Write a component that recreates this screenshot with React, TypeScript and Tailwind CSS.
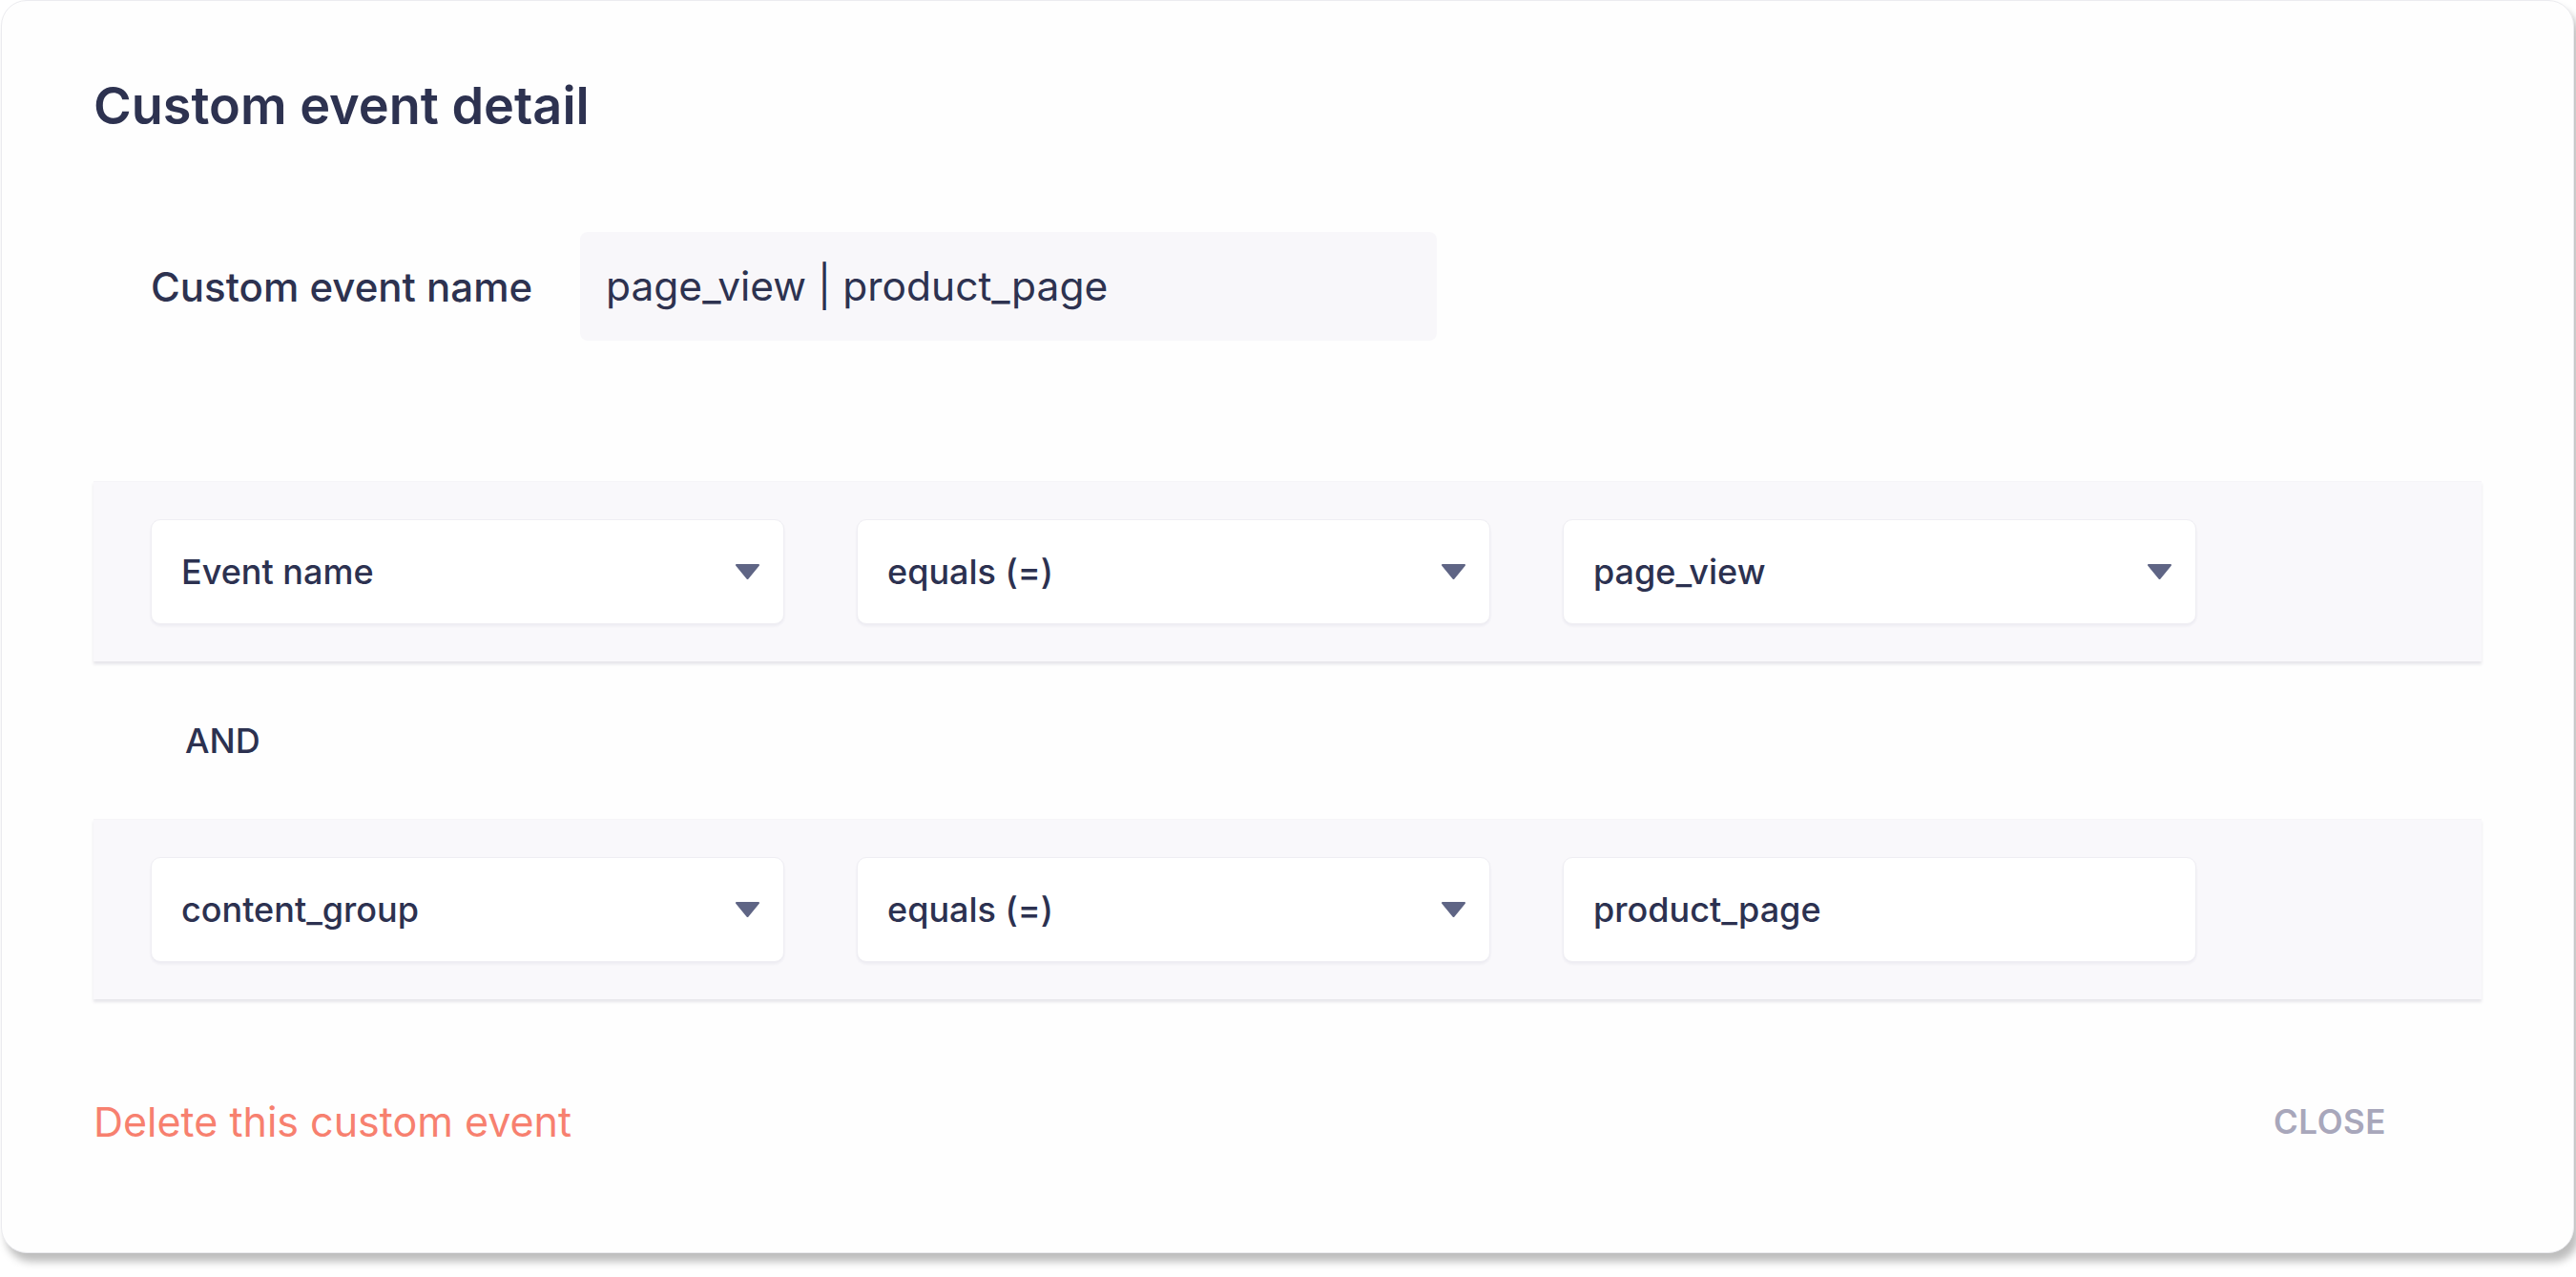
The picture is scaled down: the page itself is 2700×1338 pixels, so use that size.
import React from "react";

type FieldProps = {
  value: string;
  caret?: boolean;
};

function Caret() {
  return (
    <svg aria-hidden width="27" height="16" viewBox="0 0 27 16" className="shrink-0">
      <path
        d="M2 1h23L13.5 15z"
        fill="#5f6585"
        stroke="#5f6585"
        strokeWidth="2"
        strokeLinejoin="round"
      />
    </svg>
  );
}

function Field({ value, caret = true }: FieldProps) {
  return (
    <div className="flex h-[110px] w-[664px] items-center justify-between rounded-[10px] border border-[#efeef3] bg-white pl-[31px] pr-[24px] shadow-[0_2px_3px_rgba(40,40,80,0.06)]">
      <span className="text-[36px] font-medium text-[#2c3150]">{value}</span>
      {caret && <Caret />}
    </div>
  );
}

function ConditionRow({ fields }: { fields: FieldProps[] }) {
  return (
    <div className="flex h-[189px] items-center gap-[76px] border-t border-[#f6f5f8] bg-[#f9f8fb] pl-[60px] shadow-[0_3px_3px_rgba(60,50,90,0.12)]">
      {fields.map((f, i) => (
        <Field key={i} {...f} />
      ))}
    </div>
  );
}

export default function App() {
  return (
    <div
      className="h-[1338px] w-[2700px] bg-white"
      style={{ fontFamily: "Inter, 'Noto Sans', sans-serif" }}
    >
      <div className="ml-[1px] flex h-[1313px] w-[2697px] flex-col rounded-[27px] border border-[#ebebef] bg-[#fefefe] px-[96px] shadow-[5px_9px_8px_rgba(0,0,0,0.26)]">
        <h1 className="pt-[78px] text-[54px] font-semibold leading-[64px] text-[#2d3250]">
          Custom event detail
        </h1>

        <div className="mt-[100px] flex items-center pl-[60px]">
          <label className="w-[450px] text-[42px] font-medium text-[#2d3250]">
            Custom event name
          </label>
          <div className="flex h-[114px] w-[898px] items-center rounded-[8px] bg-[#f8f7fa] pl-[27px] text-[42.5px] text-[#2d3250]">
            page_view | product_page
          </div>
        </div>

        <div className="mt-[147px]">
          <ConditionRow
            fields={[{ value: "Event name" }, { value: "equals (=)" }, { value: "page_view" }]}
          />
        </div>

        <div className="flex h-[165px] items-center pl-[96px] text-[36px] font-medium text-[#2c3150]">
          AND
        </div>

        <ConditionRow
          fields={[
            { value: "content_group" },
            { value: "equals (=)" },
            { value: "product_page", caret: false },
          ]}
        />

        <div className="mt-[96px] flex items-center justify-between pr-[100px]">
          <button className="text-[43px] text-[#f7806f]">Delete this custom event</button>
          <button className="text-[35px] font-semibold tracking-[0.5px] text-[#a8a7bb]">
            CLOSE
          </button>
        </div>
      </div>
    </div>
  );
}
